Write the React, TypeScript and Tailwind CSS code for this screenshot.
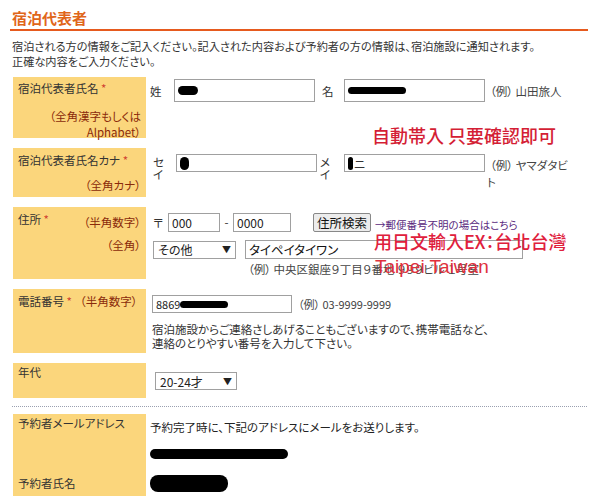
import React from "react";

const Y = "bg-[#fbd67c]";
const jp = "[font-family:'Noto_Sans_CJK_JP','Noto_Sans',sans-serif] [font-feature-settings:'palt']";

function Box({ w, h, children }: { w: string; h: string; children?: React.ReactNode }) {
  return (
    <div className={`${w} ${h} border border-[#a0a0a0] bg-white flex items-center pl-[3px] shrink-0 overflow-hidden`}>
      {children}
    </div>
  );
}

function Blob({ w, h = "h-[9px]" }: { w: string; h?: string }) {
  return <span className={`inline-block ${w} ${h} bg-black rounded-full`} />;
}

function Sel({ w, text }: { w: string; text: string }) {
  return (
    <div className={`${w} h-[18px] border border-[#a0a0a0] bg-white flex items-center justify-between px-[4px] shrink-0 text-[12px] text-[#222]`}>
      <span>{text}</span>
      <span className="text-[9px] text-[#222]">▼</span>
    </div>
  );
}

export default function App() {
  return (
    <div className={`relative w-[600px] h-[503px] overflow-hidden bg-white text-[#333] ${jp}`}>
      <div className="px-[10px] pt-[8px]">
        <div className="pl-[2px] text-[15px] font-bold leading-[20px] text-[#e0661a]">宿泊代表者</div>
        <div className="mt-[1px] h-[2px] w-[578px] bg-[#e65a1e]" />
        <div className="pl-[2px] mt-[8px] text-[11.2px] leading-[15px] text-[#333]">
          <div>宿泊される方の情報をご記入ください。記入された内容および予約者の方の情報は、宿泊施設に通知されます。</div>
          <div>正確な内容をご入力ください。</div>
        </div>
      </div>

      <div className="pl-[13px] mt-[8px] flex flex-col gap-[10px] text-[11.5px] leading-[15px]">
        {/* Row 1 */}
        <div className="flex h-[61px]">
          <div className={`${Y} w-[133px] shrink-0 px-[5px] pt-[4px]`}>
            <div>宿泊代表者氏名 <span className="text-[#d04030]">*</span></div>
            <div className="mt-[12px] text-right text-[#8a2a0a] leading-[16px]">
              （全角漢字もしくは<br />Alphabet）
            </div>
          </div>
          <div className="flex items-start pt-[2px] pl-[4px]">
            <span className="w-[24px] mt-[5px]">姓</span>
            <Box w="w-[141px]" h="h-[23px]"><Blob w="w-[20px]" /></Box>
            <span className="ml-[7px] w-[22px] mt-[5px]">名</span>
            <Box w="w-[141px]" h="h-[23px]"><Blob w="w-[58px]" h="h-[7px]" /></Box>
            <span className="ml-[5px] mt-[5px] text-[#444]">（例） 山田旅人</span>
          </div>
        </div>

        {/* Row 2 */}
        <div className="flex h-[49px]">
          <div className={`${Y} w-[133px] shrink-0 px-[5px] pt-[5px]`}>
            <div>宿泊代表者氏名カナ <span className="text-[#d04030]">*</span></div>
            <div className="mt-[10px] text-right text-[#8a2a0a]">（全角カナ）</div>
          </div>
          <div className="flex items-start pt-[6px] pl-[4px]">
            <span className="w-[26px] pl-[3px] leading-[12px] mt-[2px]">セ<br />イ</span>
            <Box w="w-[141px]" h="h-[18px]"><Blob w="w-[9px]" h="h-[13px]" /></Box>
            <span className="w-[27px] pl-[3px] leading-[12px] mt-[2px]">メ<br />イ</span>
            <Box w="w-[141px]" h="h-[18px]">
              <Blob w="w-[5px]" h="h-[13px]" />
              <span className="ml-[1px] text-[12px]">ニ</span>
            </Box>
            <div className="mt-[3px] text-[#444] leading-[17px]">
              <div className="ml-[5px]">（例） ヤマダタビ</div>
              <div className="ml-[2px]">ト</div>
            </div>
          </div>
        </div>

        {/* Row 3 address */}
        <div className="flex h-[72px]">
          <div className={`${Y} w-[133px] shrink-0 px-[5px] pt-[5px]`}>
            <div className="flex justify-between">
              <span>住所 <span className="text-[#d04030]">*</span></span>
              <span className="text-[#8a2a0a] mt-[3px]">（半角数字）</span>
            </div>
            <div className="mt-[8px] text-right text-[#8a2a0a]">（全角）</div>
          </div>
          <div className="pl-[7px] pt-[6px] flex flex-col">
            <div className="flex items-center">
              <span className="text-[12px] w-[15px]">〒</span>
              <Box w="w-[52px]" h="h-[19px]"><span className="text-[12px] text-[#222]">000</span></Box>
              <span className="w-[13px] text-center">-</span>
              <Box w="w-[58px]" h="h-[19px]"><span className="text-[12px] text-[#222]">0000</span></Box>
              <div className="ml-[22px] h-[19px] px-[3px] border border-[#888] rounded-[2px] bg-[#ececec] text-[12.5px] leading-[17px] text-[#111]">住所検索</div>
              <span className="ml-[4px] text-[10.5px] text-[#5a2a80] mt-[4px]">→郵便番号不明の場合はこちら</span>
            </div>
            <div className="flex items-center mt-[8px]">
              <Sel w="w-[83px]" text="その他" />
              <div className="ml-[9px] w-[278px] h-[19px] border border-[#a0a0a0] bg-white pl-[3px] text-[12.5px] leading-[17px] text-[#111]">タイペイタイワン</div>
            </div>
            <div className="mt-[3px] ml-[95px] text-[#444]">（例） 中央区銀座９丁目９番地 ９９９ビル １号室</div>
          </div>
        </div>

        {/* Row 4 phone */}
        <div className="flex h-[64px]">
          <div className={`${Y} w-[133px] shrink-0 px-[5px] pt-[5px]`}>
            <span>電話番号 <span className="text-[#d04030]">*</span></span>
            <span className="ml-[8px] text-[#8a2a0a]">（半角数字）</span>
          </div>
          <div className="pl-[6px] pt-[6px] flex flex-col">
            <div className="flex items-center">
              <Box w="w-[140px]" h="h-[18px]">
                <span className="text-[11px] text-[#222]">8869</span>
                <Blob w="w-[48px]" h="h-[7px]" />
              </Box>
              <span className="ml-[6px] text-[#444] text-[11px]">（例） 03-9999-9999</span>
            </div>
            <div className="mt-[9px] text-[11.5px] leading-[14px] text-[#333]">
              <div>宿泊施設からご連絡さしあげることもございますので、携帯電話など、</div>
              <div>連絡のとりやすい番号を入力して下さい。</div>
            </div>
          </div>
        </div>

        {/* Row 5 age */}
        <div className="flex h-[35px]">
          <div className={`${Y} w-[133px] shrink-0 px-[5px] pt-[2px]`}>年代</div>
          <div className="pl-[9px] pt-[9px]">
            <Sel w="w-[82px]" text="20-24才" />
          </div>
        </div>
      </div>

      <div className="ml-[12px] mt-[8px] w-[575px] border-t border-dotted border-[#9aa0b0]" />

      <div className="pl-[13px] mt-[7px] flex text-[11.5px] leading-[15px]">
        <div className={`${Y} w-[133px] h-[82px] shrink-0 px-[5px] pt-[2px] flex flex-col justify-between pb-[5px]`}>
          <div>予約者メールアドレス</div>
          <div>予約者氏名</div>
        </div>
        <div className="pl-[4px] pt-[6px] flex flex-col">
          <div className="text-[#222]">予約完了時に、下記のアドレスにメールをお送りします。</div>
          <div className="mt-[14px] flex items-center">
            <Blob w="w-[138px]" h="h-[10px]" />
          </div>
          <div className="mt-[16px]">
            <span className="inline-block w-[78px] h-[17px] bg-black rounded-[8px]" />
          </div>
        </div>
      </div>

      {/* red annotations */}
      <div className="absolute left-[372px] top-[124px] text-[18px] leading-[22px] font-medium text-[#d41e35] [font-family:'Noto_Sans_CJK_TC',sans-serif]">自動帯入 只要確認即可</div>
      <div className="absolute left-[374px] top-[230px] text-[18px] leading-[22px] font-medium text-[#e0203c] [font-family:'Noto_Sans_CJK_TC',sans-serif]">用日文輸入EX：台北台灣</div>
      <div className="absolute left-[375px] top-[256px] text-[19px] leading-[22px] text-[#e0303c] [font-family:'Liberation_Sans',sans-serif]">Taipei Taiwan</div>
    </div>
  );
}
